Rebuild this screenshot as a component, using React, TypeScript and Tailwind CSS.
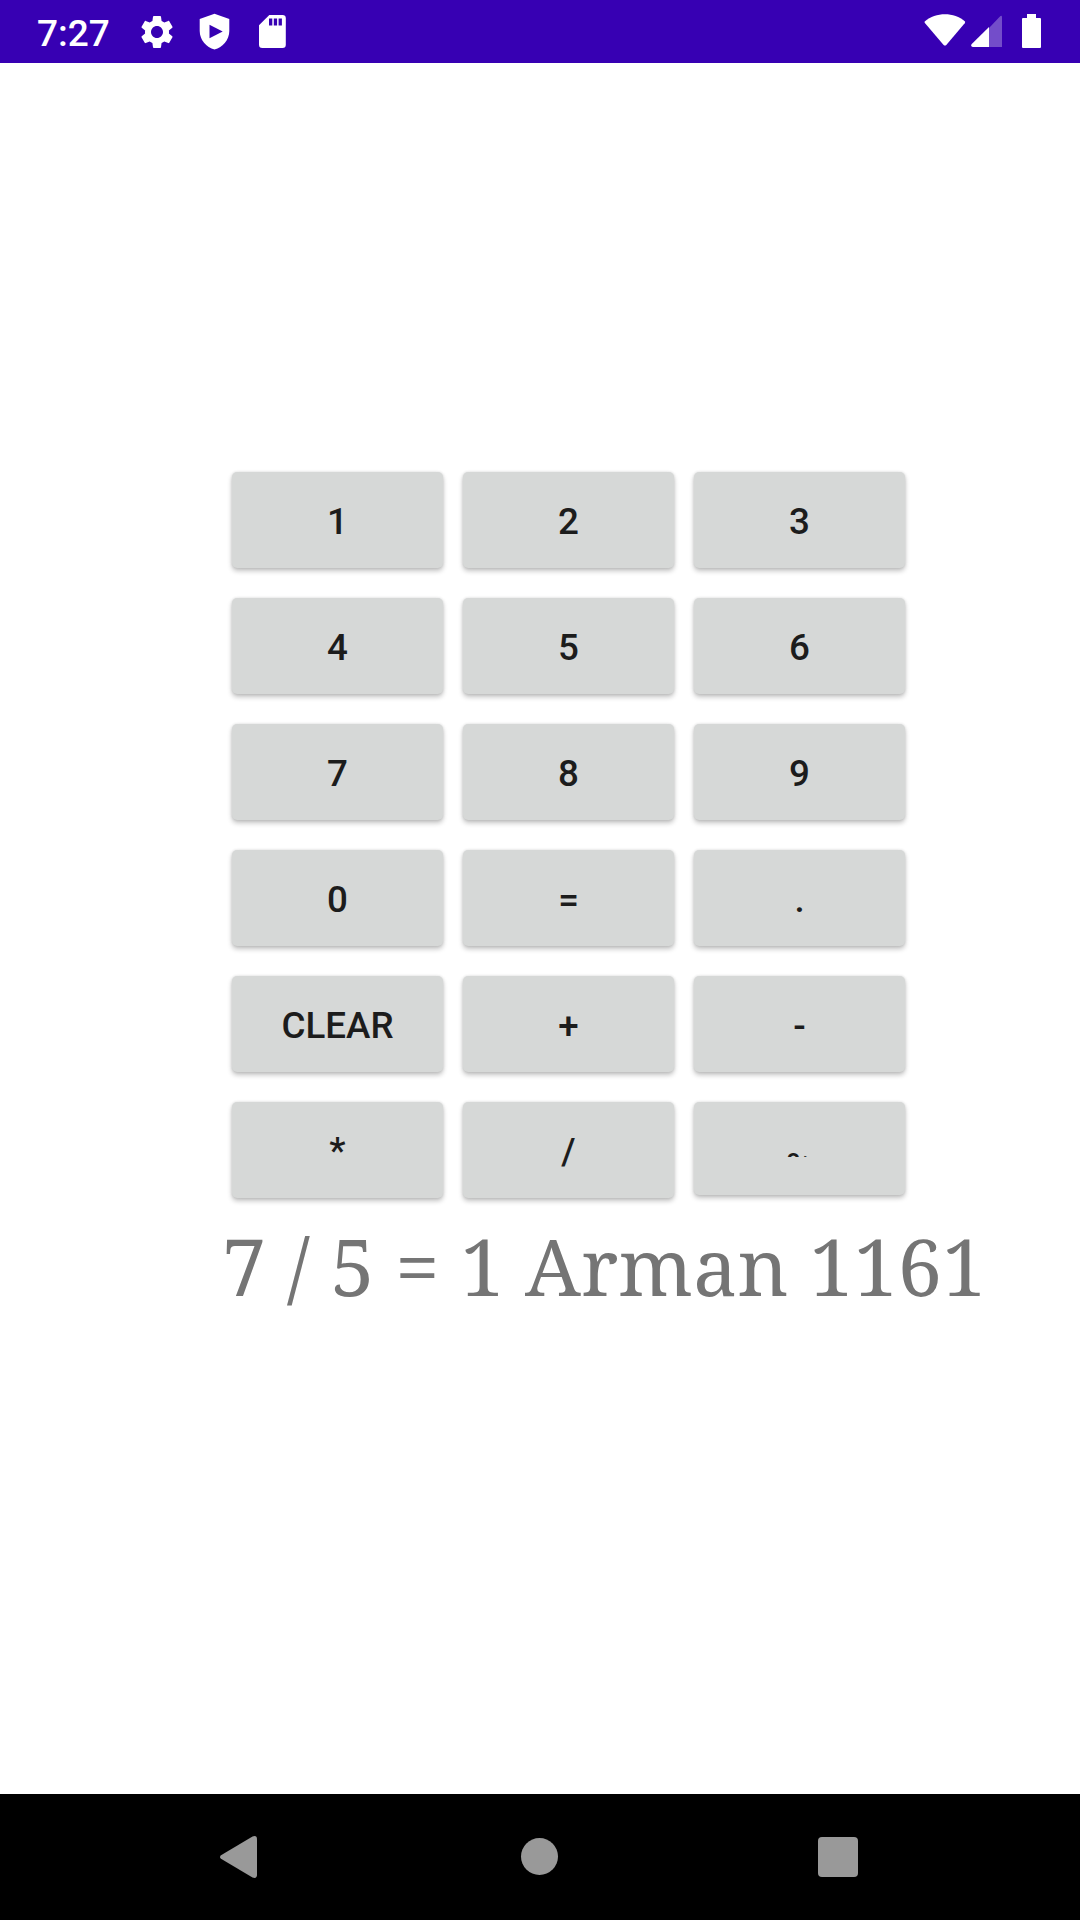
import React from "react";

const keys = [
  "1", "2", "3",
  "4", "5", "6",
  "7", "8", "9",
  "0", "=", ".",
  "CLEAR", "+", "-",
  "*", "/", "%",
];

function StatusBar() {
  return (
    <header className="flex h-[63px] shrink-0 items-start bg-[#3700b3] text-white">
      <span className="ml-[37px] mt-[12px] w-[76px] text-[37px] font-medium leading-[44px]">7:27</span>
      <svg className="ml-[23.5px] mt-[11.5px] size-[40px]" viewBox="0 0 24 24" fill="currentColor">
        <path d="M19.14 12.94c.04-.3.06-.61.06-.94 0-.32-.02-.64-.07-.94l2.03-1.58c.18-.14.23-.41.12-.61l-1.92-3.32c-.12-.22-.37-.29-.59-.22l-2.39.96c-.5-.38-1.03-.7-1.62-.94l-.36-2.54c-.04-.24-.24-.41-.48-.41h-3.84c-.24 0-.43.17-.47.41l-.36 2.54c-.59.24-1.13.57-1.62.94l-2.39-.96c-.22-.08-.47 0-.59.22L2.74 8.87c-.12.21-.08.47.12.61l2.03 1.58c-.05.3-.09.63-.09.94s.02.64.07.94l-2.03 1.58c-.18.14-.23.41-.12.61l1.92 3.32c.12.22.37.29.59.22l2.39-.96c.5.38 1.03.7 1.62.94l.36 2.54c.05.24.24.41.48.41h3.84c.24 0 .44-.17.47-.41l.36-2.54c.59-.24 1.13-.56 1.62-.94l2.39.96c.22.08.47 0 .59-.22l1.92-3.32c.12-.22.07-.47-.12-.61zM12 15.6c-1.98 0-3.6-1.62-3.6-3.6s1.62-3.6 3.6-3.6 3.6 1.62 3.6 3.6-1.62 3.6-3.6 3.6z" />
      </svg>
      <svg className="ml-[22.5px] mt-[13px] h-[37px] w-[31px]" viewBox="0 0 31 37">
        <path d="M15.5.7 L30.3 6.1 V18 C30.3 27 23.7 34.2 15.5 36.5 C7.3 34.2.7 27 .7 18 V6.1Z" fill="white" />
        <path d="M10.5 11.8 V25.2 L23.7 18.5Z" fill="#3700b3" />
      </svg>
      <svg className="ml-[29px] mt-[15px] h-[33px] w-[27px]" viewBox="0 0 27 33">
        <path d="M10.3 0 H23.5 Q26.8 0 26.8 3.3 V29.7 Q26.8 33 23.5 33 H3.3 Q0 33 0 29.7 V10.3Z" fill="white" />
        <path d="M10 3.5h3.3v7H10zM14.8 3.5h3.3v7h-3.3zM19.6 3.5h3.3v7h-3.3z" fill="#3700b3" />
      </svg>
      <svg className="ml-auto mt-[14px] h-[32px] w-[42px]" viewBox="0 0 42 32">
        <path d="M.7 7.4 C12-2.2 30-2.2 41 7.4 Q41.4 8.4 40.7 9.3 L22.3 31 Q20.9 32.2 19.6 31 L1.1 9.3 Q.3 8.3.7 7.4Z" fill="white" />
      </svg>
      <svg className="ml-[5px] mt-[15px] h-[32px] w-[31px]" viewBox="0 0 31 32">
        <path d="M18 13 L29.2 1.2 Q31 .2 31 2.2 V32 H18Z" fill="white" fillOpacity=".3" />
        <path d="M18 12 V32 H1.8 Q-.5 31.5.5 29.3Z" fill="white" />
      </svg>
      <svg className="ml-[20px] mr-[39px] mt-[14px] h-[34px] w-[19px]" viewBox="0 0 19 34">
        <path d="M5 0h9v4h4q1 0 1 1v28q0 1-1 1H1q-1 0-1-1V5q0-1 1-1h4z" fill="white" />
      </svg>
    </header>
  );
}

const keyShape: Record<string, string> = {
  "%": "h-[93px] pt-[43px]",
  "*": "h-[96px] pt-[27px]",
  "+": "h-[96px] pt-[29px]",
  "-": "h-[96px] pt-[29px]",
};

function Key({ label }: { label: string }) {
  return (
    <button
      className={
        "flex w-[211px] justify-center rounded-[5px] bg-[#d6d8d7] text-[36.75px] font-medium leading-[43px] text-[#1c1c1c] shadow-[0_3px_5px_rgba(0,0,0,0.24),0_0_3px_rgba(0,0,0,0.12)] " +
        (keyShape[label] ?? "h-[96px] pt-[28px]")
      }
    >
      {label === "%" ? <span className="h-[12px] overflow-hidden">{label}</span> : label}
    </button>
  );
}

function NavBar() {
  return (
    <nav className="flex h-[126px] shrink-0 items-start bg-black text-[#999999]">
      <svg className="ml-[220px] mt-[42px] h-[42px] w-[37px]" viewBox="0 0 37 42" fill="currentColor">
        <path d="M1 19.2 L32.5.5 Q37-1 37 3.2 V38.8 Q37 43 32.5 41.5 L1 22.8 Q-1 21 1 19.2Z" />
      </svg>
      <div className="ml-[264px] mt-[44px] size-[37px] rounded-full bg-[#999999]" />
      <div className="ml-[260px] mt-[43px] size-[40px] rounded-[4px] bg-[#999999]" />
    </nav>
  );
}

export default function App() {
  return (
    <div className="flex h-[1920px] w-[1080px] flex-col overflow-hidden bg-white font-['Roboto',sans-serif]">
      <StatusBar />
      <main className="flex-1 pt-[409px]">
        <div className="ml-[232px] grid auto-rows-[96px] grid-cols-[repeat(3,211px)] gap-x-[20px] gap-y-[30px]">
          {keys.map((label) => (
            <Key key={label} label={label} />
          ))}
        </div>
        <p className="ml-[222px] mt-[14px] whitespace-nowrap font-['Noto_Serif',serif] text-[79px] leading-[107px] tracking-[0.1px] text-[#757575]">
          7 / 5 = 1 Arman 1161
        </p>
      </main>
      <NavBar />
    </div>
  );
}
